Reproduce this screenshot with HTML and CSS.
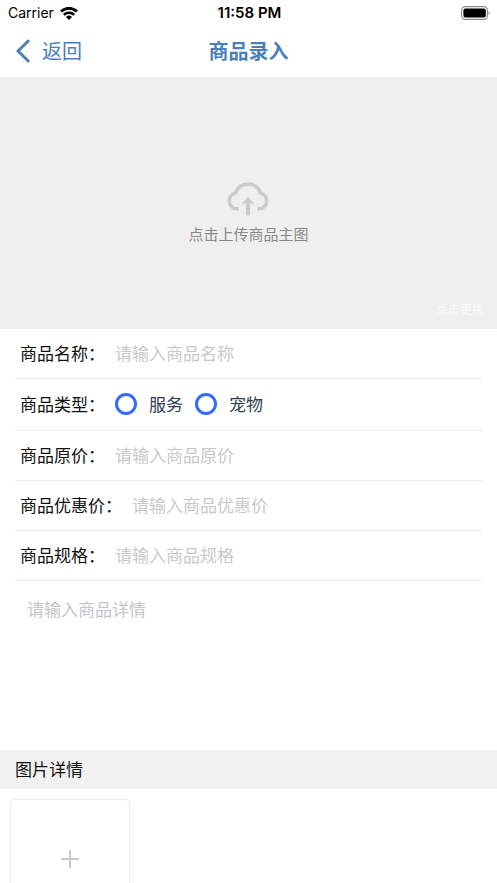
FILE: index.html
```html
<!DOCTYPE html>
<html lang="zh-CN">
<head>
  <meta charset="utf-8">
  <meta name="viewport" content="width=device-width, initial-scale=1">
  <title>商品录入</title>
  <link rel="stylesheet" href="styles.css">
</head>
<body>
  <div class="status-bar">
    <div class="carrier">
      <span>Carrier</span>
      <svg class="wifi" viewBox="0 0 18 13" aria-hidden="true">
        <path d="M1 4.500a11.500 11.500 0 0 1 16 0" fill="none" stroke="#000" stroke-width="2.800"/>
        <path d="M3.800 7.900a7.400 7.400 0 0 1 10.400 0" fill="none" stroke="#000" stroke-width="2.500"/>
        <path d="M9 13 6 10a4.300 4.300 0 0 1 6 0z"/>
      </svg>
    </div>
    <span class="clock">11:58 PM</span>
    <svg class="battery" viewBox="0 0 30 14" aria-hidden="true">
      <rect x="0.6" y="0.6" width="25.8" height="12.8" rx="3.6" fill="none" stroke="#8c8c8c" stroke-width="1.1"/>
      <rect x="2.4" y="2.4" width="22.4" height="9.2" rx="2"/>
      <path d="M27.6 5v4c1.4-.6 1.4-3.400 0-4z" fill="#8c8c8c"/>
    </svg>
  </div>
  <header class="nav">
    <a class="back" href="#">
      <svg class="chevron" viewBox="0 0 14 24" aria-hidden="true">
        <path d="M12.200 2 2 12l10.200 10" fill="none" stroke="currentColor" stroke-width="3" stroke-linecap="round" stroke-linejoin="round"/>
      </svg>
      <span>返回</span>
    </a>
    <h1 class="title">商品录入</h1>
  </header>
  <main class="content">
    <section class="hero">
      <button class="upload" type="button">
        <svg class="cloud" viewBox="0 0 44 34" aria-hidden="true">
          <path d="M12.800 26.800H10.500A7.800 8 0 0 1 9.600 11C11.500 5.500 16 2 22 2s10.500 3.500 12.400 9a7.800 8 0 0 1-.9 15.800H31.400" fill="none" stroke="#cacaca" stroke-width="3.600" stroke-linejoin="round"/>
          <path d="m22 14.500 6 7H24V33.500h-4V21.500h-4z" fill="#cacaca"/>
        </svg>
        <span>点击上传商品主图</span>
      </button>
      <button class="change" type="button">点击更换</button>
    </section>
    <form>
      <div class="rows">
        <div class="row">
          <label for="name">商品名称：</label>
          <input class="field" id="name" type="text" placeholder="请输入商品名称">
        </div>
        <div class="row row-options" role="radiogroup" aria-labelledby="type">
          <span id="type">商品类型：</span>
          <div class="options">
            <label class="option"><input class="radio" type="radio" name="type"><span>服务</span></label>
            <label class="option"><input class="radio" type="radio" name="type"><span>宠物</span></label>
          </div>
        </div>
        <div class="row">
          <label for="price">商品原价：</label>
          <input class="field" id="price" type="text" placeholder="请输入商品原价">
        </div>
        <div class="row">
          <label for="sale">商品优惠价：</label>
          <input class="field" id="sale" type="text" placeholder="请输入商品优惠价">
        </div>
        <div class="row">
          <label for="spec">商品规格：</label>
          <input class="field" id="spec" type="text" placeholder="请输入商品规格">
        </div>
      </div>
      <textarea class="details" aria-label="商品详情" placeholder="请输入商品详情"></textarea>
      <h2 class="section-title">图片详情</h2>
      <div class="gallery">
        <button class="add" type="button" aria-label="添加图片">
          <svg class="plus" viewBox="0 0 18 18" aria-hidden="true">
            <path d="M9 0v18M0 9h18" stroke="#c8c8c8" stroke-width="2"/>
          </svg>
        </button>
      </div>
    </form>
  </main>
</body>
</html>
```
FILE: styles.css
```css
* {
  box-sizing: border-box;
}

body {
  display: flex;
  flex-direction: column;
  height: 100vh;
  margin: 0;
  background: #fff;
  color: #111;
  font: 17px/24px "Noto Sans CJK SC", sans-serif;
}

button,
input,
textarea {
  font: inherit;
}

button {
  padding: 0;
  border: 0;
  background: none;
  cursor: pointer;
}

.status-bar {
  display: grid;
  grid-template-columns: 1fr auto 1fr;
  align-items: center;
  height: 26px;
  padding: 0 6px 0 8px;
  color: #000;
  font: 14px/26px Inter, sans-serif;
}

.carrier {
  display: flex;
  align-items: center;
  gap: 6px;
}

.wifi {
  width: 18px;
  height: 13px;
}

.clock {
  font-size: 15px;
  font-weight: 600;
}

.battery {
  justify-self: end;
  width: 30px;
  height: 14px;
}

.nav {
  display: grid;
  grid-template-columns: 1fr auto 1fr;
  align-items: center;
  height: 51px;
  padding: 0 16px 2px;
  color: #4a80b9;
  font-size: 20px;
}

.back {
  display: flex;
  align-items: center;
  gap: 12px;
  color: inherit;
  text-decoration: none;
}

.chevron {
  width: 14px;
  height: 24px;
}

.title {
  margin: 0;
  font-size: 20px;
  font-weight: 700;
}

.content {
  flex: 1;
  min-height: 0;
  overflow-y: auto;
  scrollbar-width: none;
}

.hero {
  position: relative;
  display: flex;
  align-items: center;
  justify-content: center;
  height: 252px;
  background: #efefef;
}

.upload {
  display: flex;
  flex-direction: column;
  align-items: center;
  gap: 6px;
  padding-top: 22px;
  color: #888;
  font-size: 15px;
}

.cloud {
  width: 44px;
  height: 34px;
}

.change {
  position: absolute;
  right: 13px;
  bottom: 8px;
  color: #fafafa;
  font-size: 12px;
}

.rows {
  padding: 0 15px;
}

.row {
  display: flex;
  align-items: center;
  gap: 10px;
  padding: 12px 5px 13px;
  border-bottom: 1px solid #ececec;
}

.row-options {
  padding: 13px 5px 14px;
}

.field {
  flex: 1;
  min-width: 0;
  height: 24px;
  padding: 0;
  border: 0;
  outline: 0;
  background: none;
}

.field::placeholder {
  color: #c9c9c9;
}

.options,
.option {
  display: flex;
  align-items: center;
  gap: 12px;
}

.option {
  color: #2c3e50;
}

.radio {
  width: 22px;
  height: 22px;
  margin: 0;
  border: 3px solid #3468ff;
  border-radius: 50%;
  appearance: none;
}

.radio:checked {
  border-width: 7px;
}

.details {
  display: block;
  width: 100%;
  height: 169px;
  padding: 16px 27px;
  border: 0;
  outline: 0;
  resize: none;
}

.details::placeholder {
  color: #c5c5c9;
}

.section-title {
  margin: 0;
  padding: 7px 15px 8px;
  background: #f1f1f1;
  font-size: 17px;
  font-weight: 400;
}

.gallery {
  padding: 10px;
}

.add {
  display: flex;
  align-items: center;
  justify-content: center;
  width: 120px;
  height: 120px;
  border: 1px solid #ececec;
  border-radius: 4px;
}

.plus {
  width: 18px;
  height: 18px;
}
```
